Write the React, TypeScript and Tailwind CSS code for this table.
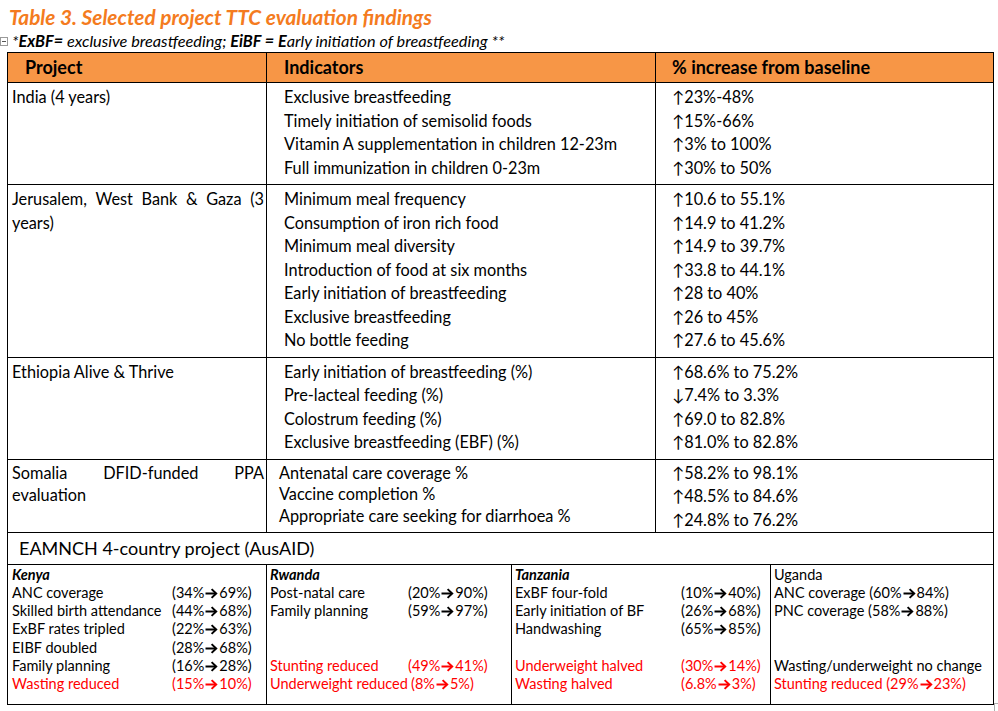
import React from "react";

const Arrow = () => (
  <svg width="13" height="11" viewBox="0 0 13 11" className="inline-block align-[-1px] mx-[1px]">
    <path d="M0.5 5.5 H11" stroke="currentColor" strokeWidth="2" fill="none" />
    <path d="M6.6 1.1 L11.2 5.5 L6.6 9.9" stroke="currentColor" strokeWidth="2" fill="none" />
  </svg>
);

type Item = { l?: string; v?: [string, string]; red?: boolean; lw?: string } | null;

const V = ({ v }: { v: [string, string] }) => (
  <span className="whitespace-nowrap">
    ({v[0]}
    <Arrow />
    {v[1]})
  </span>
);

const CountryCol = ({
  title,
  titleBold,
  items,
  labelW,
  pl,
}: {
  title: string;
  titleBold: boolean;
  items: Item[];
  labelW: string;
  pl: string;
}) => (
  <div className={`pt-[1px] ${pl} text-[14.5px] leading-[18.3px]`}>
    <div className={titleBold ? "font-bold italic" : ""}>{title}</div>
    {items.map((it, i) =>
      it ? (
        <div key={i} className={`flex ${it.red ? "text-[#ff0000]" : ""}`}>
          <span className={`${it.lw ?? labelW} shrink-0 whitespace-nowrap`}>{it.l}</span>
          {it.v && <V v={it.v} />}
        </div>
      ) : (
        <div key={i} className="h-[18.3px]" />
      )
    )}
  </div>
);

export default function App() {
  const rows: { project: React.ReactNode; ind: string[]; val: string[]; pt: string }[] = [
    {
      project: <div className="pl-[4px]">India (4 years)</div>,
      ind: [
        "Exclusive breastfeeding",
        "Timely initiation of semisolid foods",
        "Vitamin A supplementation in children 12-23m",
        "Full immunization in children 0-23m",
      ],
      val: ["↑23%-48%", "↑15%-66%", "↑3% to 100%", "↑30% to 50%"],
      pt: "pt-[2px] pb-[5px]",
    },
    {
      project: (
        <div className="pl-[4px] pr-[2px]">
          <div className="flex justify-between">
            <span>Jerusalem,</span>
            <span>West</span>
            <span>Bank</span>
            <span>&amp;</span>
            <span>Gaza</span>
            <span>(3</span>
          </div>
          <div>years)</div>
        </div>
      ),
      ind: [
        "Minimum meal frequency",
        "Consumption of iron rich food",
        "Minimum meal diversity",
        "Introduction of food at six months",
        "Early initiation of breastfeeding",
        "Exclusive breastfeeding",
        "No bottle feeding",
      ],
      val: [
        "↑10.6 to 55.1%",
        "↑14.9 to 41.2%",
        "↑14.9 to 39.7%",
        "↑33.8 to 44.1%",
        "↑28 to 40%",
        "↑26 to 45%",
        "↑27.6 to 45.6%",
      ],
      pt: "pt-[2px] pb-[5px]",
    },
    {
      project: <div className="pl-[4px]">Ethiopia Alive &amp; Thrive</div>,
      ind: [
        "Early initiation of breastfeeding (%)",
        "Pre-lacteal feeding (%)",
        "Colostrum feeding (%)",
        "Exclusive breastfeeding (EBF) (%)",
      ],
      val: ["↑68.6% to 75.2%", "↓7.4% to 3.3%", "↑69.0 to 82.8%", "↑81.0% to 82.8%"],
      pt: "pt-[2px] pb-[5px]",
    },
  ];

  return (
    <div className="w-[998px] h-[711px] bg-white text-black relative overflow-hidden font-['Lato',sans-serif]">
      <div className="pl-[9px] pt-[4px] text-[20.8px] leading-[26px] font-bold italic text-[#f47b20]">
        Table 3. Selected project TTC evaluation findings
      </div>
      <div className="flex items-center h-[22px]">
        <div className="w-[8px] h-[9px] border border-[#9a9a9a] mr-[4px] relative">
          <div className="absolute left-[1px] top-[3px] w-[4px] h-[1px] bg-[#555]" />
        </div>
        <div className="italic text-[16.3px] leading-[22px]">
          *<span className="font-bold">ExBF=</span> exclusive breastfeeding; <span className="font-bold">EiBF =</span>{" "}
          <span className="font-bold">E</span>arly initiation of breastfeeding **
        </div>
      </div>

      <div className="ml-[7px] w-[987px] border border-black">
        {/* header */}
        <div className="grid grid-cols-[259px_389px_1fr] bg-[#f79646] border-b border-black h-[30px] font-bold text-[18px] items-stretch">
          <div className="border-r border-black pl-[17px] flex items-center">Project</div>
          <div className="border-r border-black pl-[17px] flex items-center">Indicators</div>
          <div className="pl-[16px] flex items-center">% increase from baseline</div>
        </div>

        {rows.map((r, i) => (
          <div key={i} className="grid grid-cols-[259px_389px_1fr] border-b border-black text-[16.3px] leading-[23.5px]">
            <div className={`border-r border-black ${r.pt}`}>{r.project}</div>
            <div className={`border-r border-black pl-[17px] ${r.pt}`}>
              {r.ind.map((t) => (
                <div key={t}>{t}</div>
              ))}
            </div>
            <div className={`pl-[16px] ${r.pt}`}>
              {r.val.map((t) => (
                <div key={t}>{t}</div>
              ))}
            </div>
          </div>
        ))}

        {/* Somalia */}
        <div className="grid grid-cols-[259px_389px_1fr] border-b border-black text-[16.3px] h-[73px]">
          <div className="border-r border-black pt-[2px] pl-[4px] pr-[2px] leading-[22px]">
            <div className="flex justify-between">
              <span>Somalia</span>
              <span>DFID-funded</span>
              <span>PPA</span>
            </div>
            <div>evaluation</div>
          </div>
          <div className="border-r border-black pt-[2px] pl-[12px] leading-[21.5px]">
            <div>Antenatal care coverage %</div>
            <div>Vaccine completion %</div>
            <div>Appropriate care seeking for diarrhoea %</div>
          </div>
          <div className="pl-[16px] pt-[1px] leading-[23.5px]">
            <div>↑58.2% to 98.1%</div>
            <div>↑48.5% to 84.6%</div>
            <div>↑24.8% to 76.2%</div>
          </div>
        </div>

        {/* EAMNCH */}
        <div className="h-[32px] border-b border-black pl-[11px] flex items-center text-[18px]">
          EAMNCH 4-country project (AusAID)
        </div>
        <div className="grid grid-cols-[259px_245px_259px_1fr] h-[139px]">
          <div className="border-r border-black">
            <CountryCol
              title="Kenya"
              titleBold
              labelW="w-[160px]"
              pl="pl-[4px]"
              items={[
                { l: "ANC coverage", v: ["34%", "69%"] },
                { l: "Skilled birth attendance", v: ["44%", "68%"] },
                { l: "ExBF rates tripled", v: ["22%", "63%"] },
                { l: "EIBF doubled", v: ["28%", "68%"] },
                { l: "Family planning", v: ["16%", "28%"] },
                { l: "Wasting reduced", v: ["15%", "10%"], red: true },
              ]}
            />
          </div>
          <div className="border-r border-black">
            <CountryCol
              title="Rwanda"
              titleBold
              labelW="w-[138px]"
              pl="pl-[3px]"
              items={[
                { l: "Post-natal care", v: ["20%", "90%"] },
                { l: "Family planning", v: ["59%", "97%"] },
                null,
                null,
                { l: "Stunting reduced", v: ["49%", "41%"], red: true },
                { l: "Underweight reduced", v: ["8%", "5%"], red: true, lw: "w-[141px]" },
              ]}
            />
          </div>
          <div className="border-r border-black">
            <CountryCol
              title="Tanzania"
              titleBold
              labelW="w-[166px]"
              pl="pl-[3px]"
              items={[
                { l: "ExBF four-fold", v: ["10%", "40%"] },
                { l: "Early initiation of BF", v: ["26%", "68%"] },
                { l: "Handwashing", v: ["65%", "85%"] },
                null,
                { l: "Underweight halved", v: ["30%", "14%"], red: true },
                { l: "Wasting halved", v: ["6.8%", "3%"], red: true },
              ]}
            />
          </div>
          <div className="pt-[1px] pl-[3px] text-[14.5px] leading-[18.3px]">
            <div>Uganda</div>
            <div className="whitespace-nowrap">
              ANC coverage <V v={["60%", "84%"]} />
            </div>
            <div className="whitespace-nowrap">
              PNC coverage <V v={["58%", "88%"]} />
            </div>
            <div className="h-[18.3px]" />
            <div className="h-[18.3px]" />
            <div className="whitespace-nowrap">Wasting/underweight no change</div>
            <div className="whitespace-nowrap text-[#ff0000]">
              Stunting reduced <V v={["29%", "23%"]} />
            </div>
          </div>
        </div>
      </div>
      <div className="absolute left-[994px] top-[703px] w-[5px] h-[8px] border-l border-t border-[#b0b0b0]" />
    </div>
  );
}
